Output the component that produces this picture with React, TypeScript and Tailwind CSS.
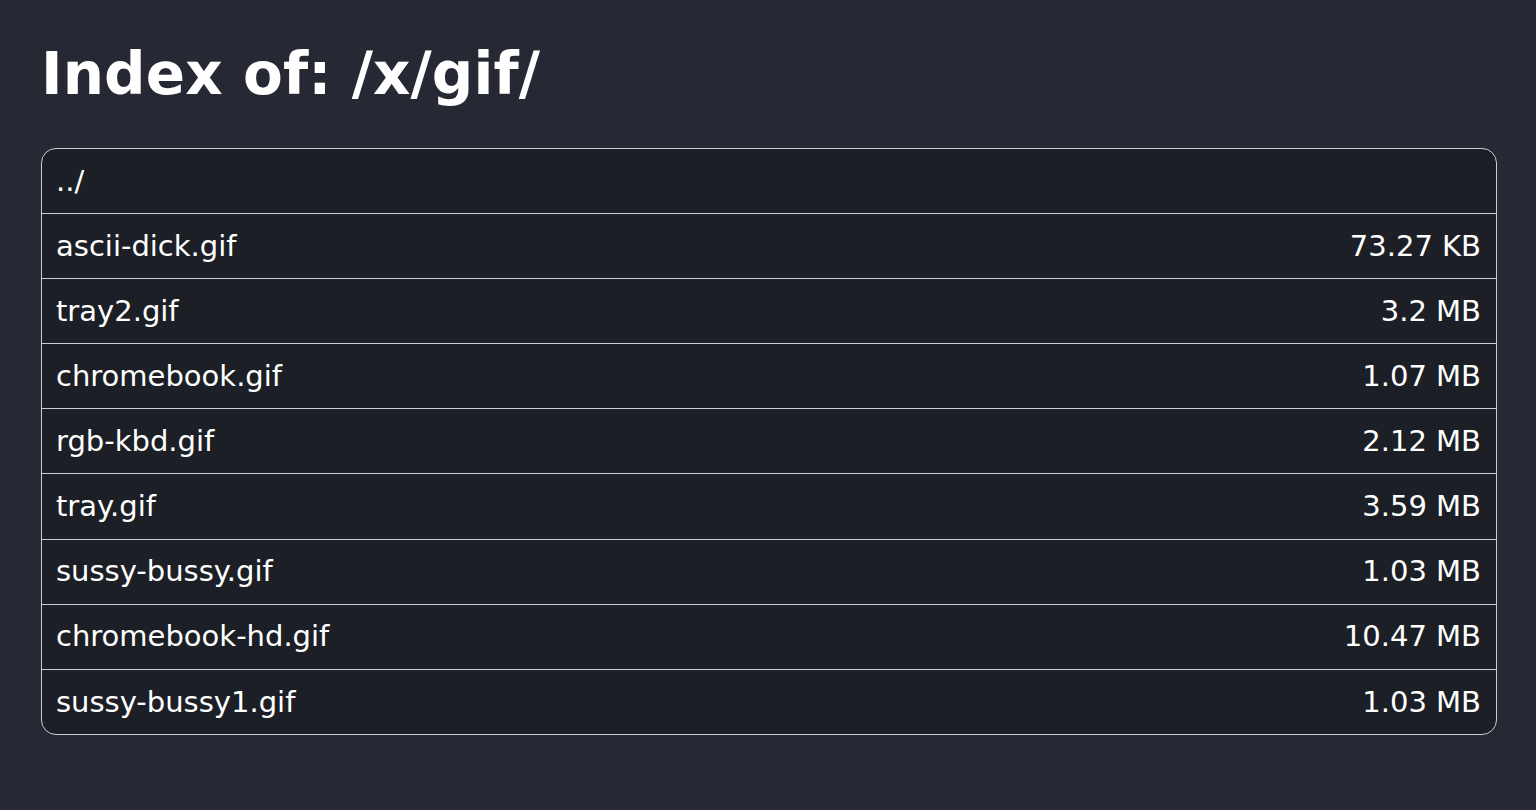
const files: { name: string; size?: string }[] = [
	{ name: "../" },
	{ name: "ascii-dick.gif", size: "73.27 KB" },
	{ name: "tray2.gif", size: "3.2 MB" },
	{ name: "chromebook.gif", size: "1.07 MB" },
	{ name: "rgb-kbd.gif", size: "2.12 MB" },
	{ name: "tray.gif", size: "3.59 MB" },
	{ name: "sussy-bussy.gif", size: "1.03 MB" },
	{ name: "chromebook-hd.gif", size: "10.47 MB" },
	{ name: "sussy-bussy1.gif", size: "1.03 MB" },
];

export default function App() {
	return (
		<div className="min-h-[810px] bg-[#262834] pl-[41px] pt-[36px] pb-10 text-white font-['DejaVu_Sans',sans-serif]">
			<h1 className="text-[58px] font-bold leading-[76px] mb-[36px] tracking-[0.1px]">
				Index of: /x/gif/
			</h1>

			<div className="w-[1456px] rounded-[15px] border border-[#cdcdcd] bg-[#1d1f26] overflow-hidden">
				{files.map((f, i) => (
					<div
						key={f.name}
						className={`flex items-center justify-between pl-[14px] pr-[15px] pt-px text-[29px] ${
							i > 0 ? "h-[65.1px] border-t border-[#cdcdcd]" : "h-[64.1px]"
						}`}
					>
						<span>{f.name}</span>
						{f.size && <span>{f.size}</span>}
					</div>
				))}
			</div>
		</div>
	);
}
